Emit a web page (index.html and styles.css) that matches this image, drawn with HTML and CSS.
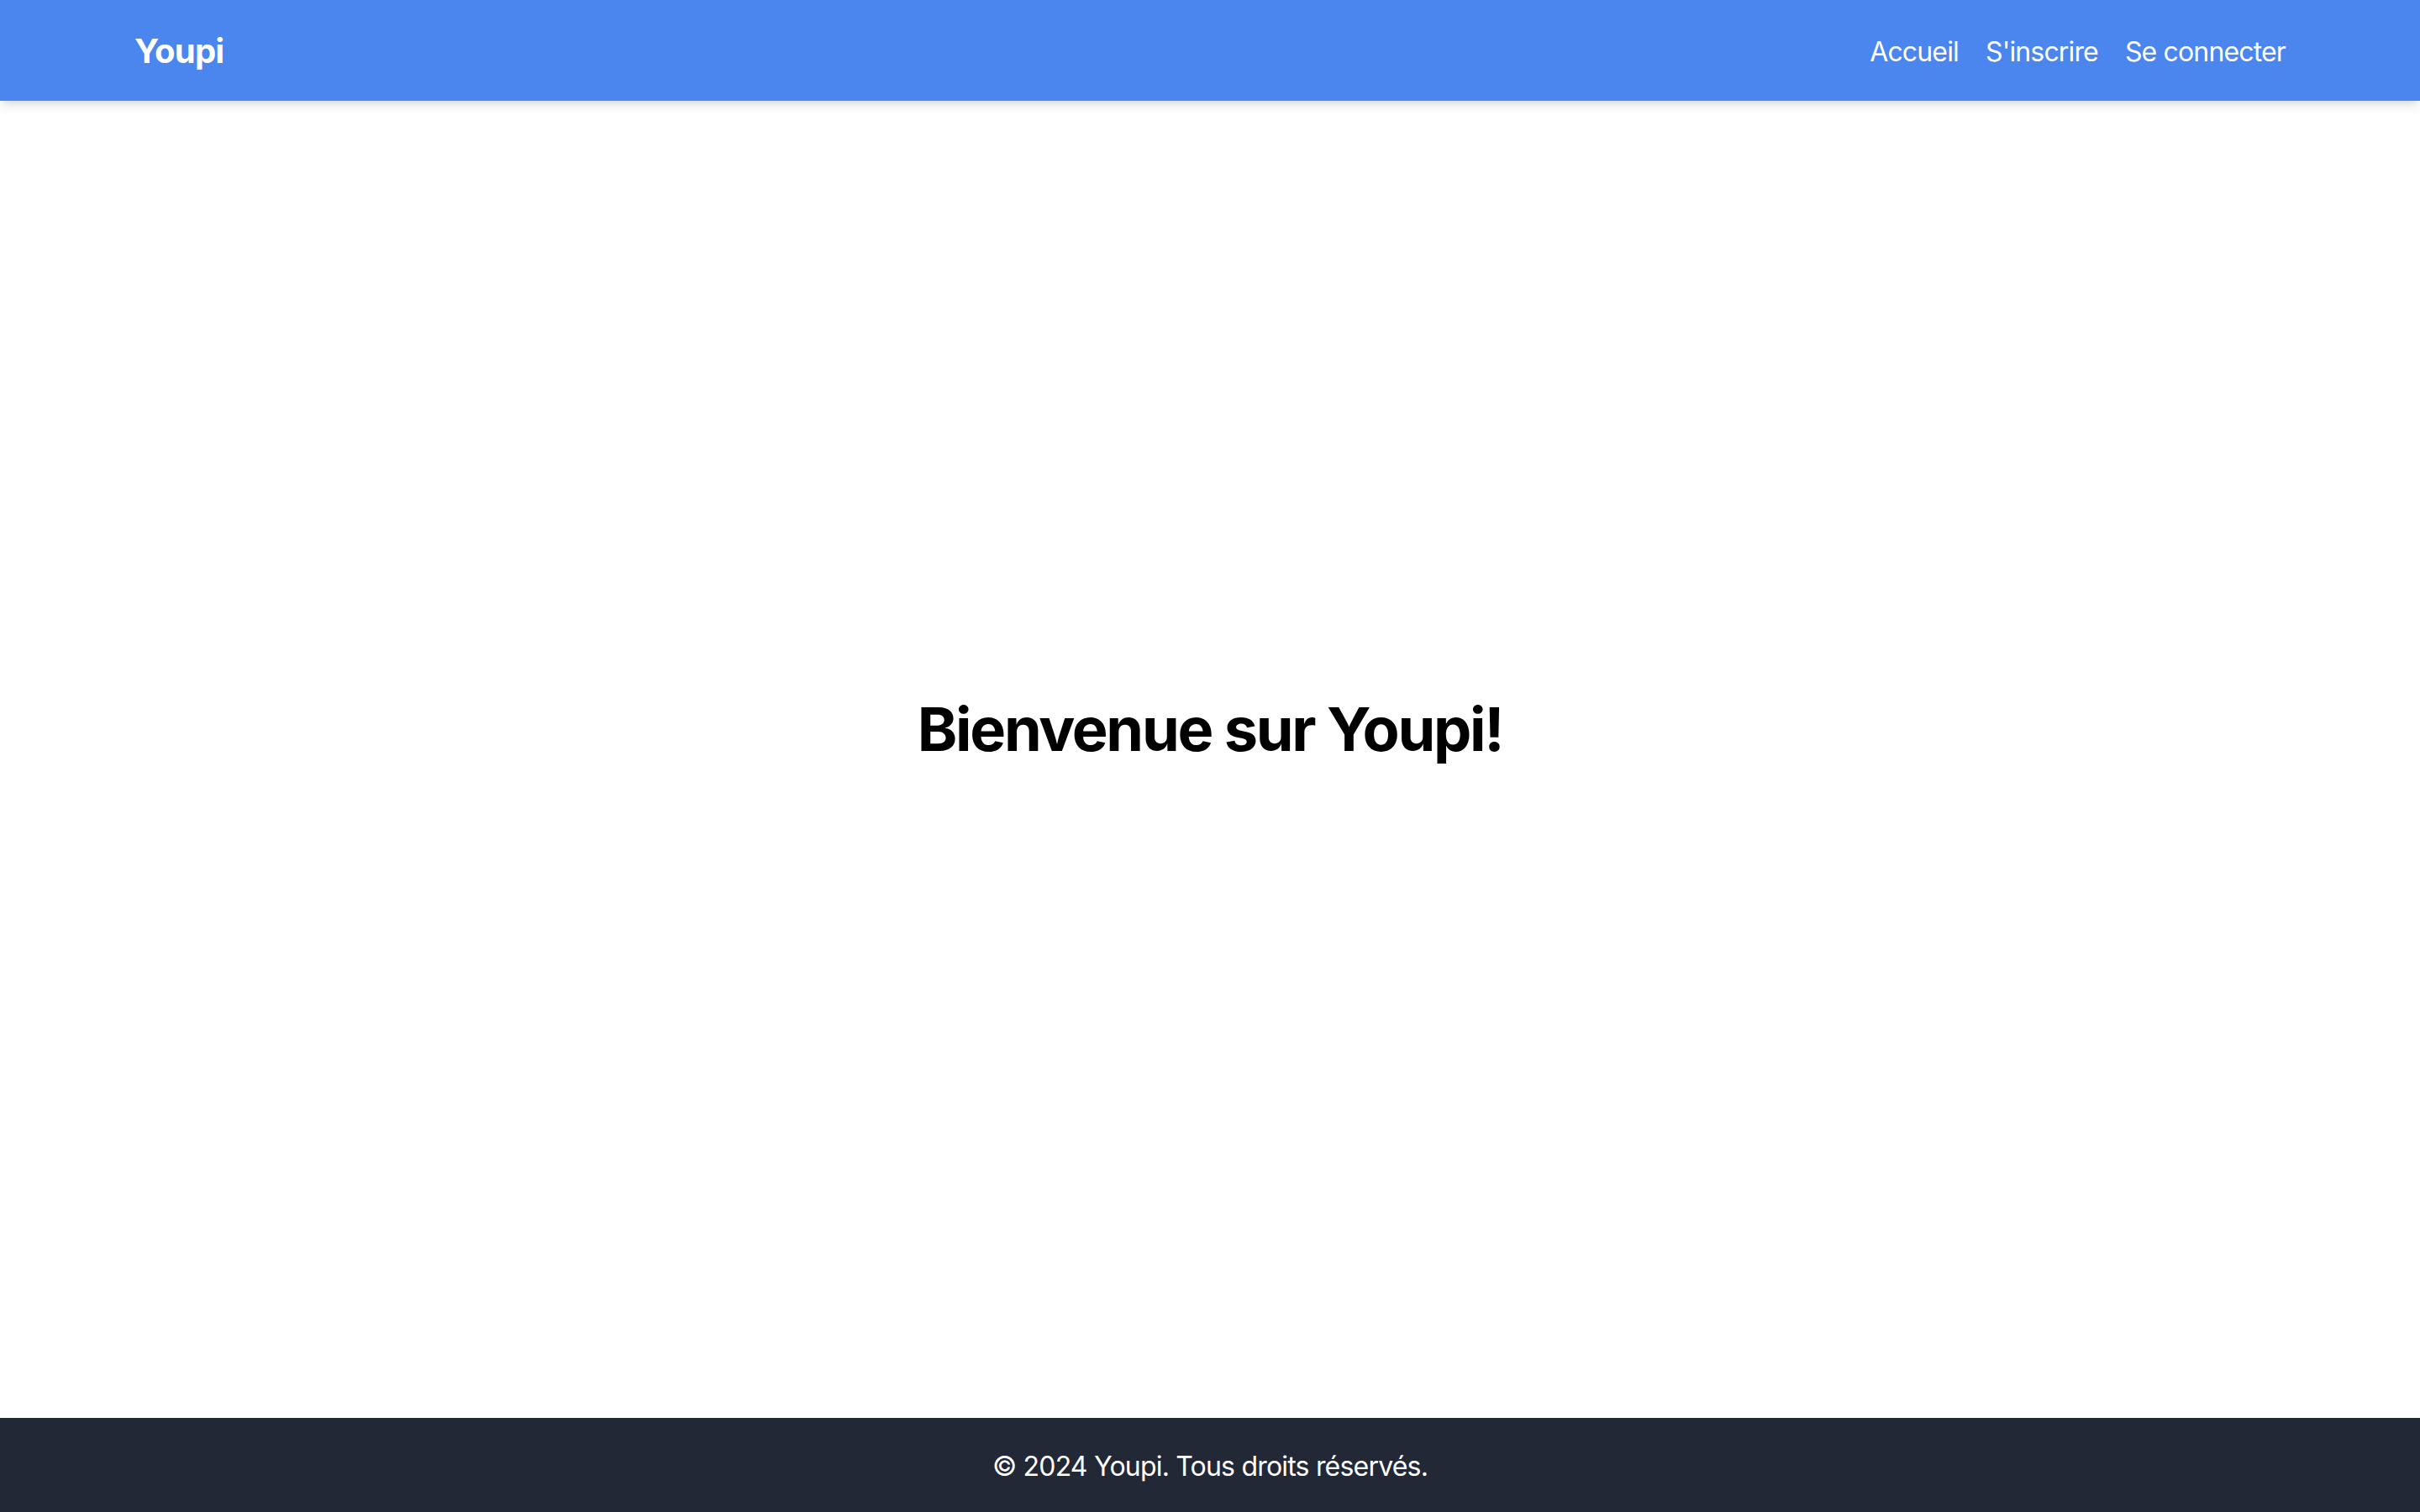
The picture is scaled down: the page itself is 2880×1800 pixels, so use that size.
FILE: index.html
```html
<!DOCTYPE html>
<html lang="fr">
<head>
<meta charset="utf-8">
<title>Youpi</title>
<link rel="stylesheet" href="styles.css">
</head>
<body>
<div class="page">
  <header class="site-header">
    <div class="container header-inner">
      <a class="logo" href="#">Youpi</a>
      <nav class="nav">
        <a href="#">Accueil</a>
        <a href="#">S'inscrire</a>
        <a href="#">Se connecter</a>
      </nav>
    </div>
  </header>
  <main class="main">
    <h1 class="title">Bienvenue sur Youpi!</h1>
  </main>
  <footer class="site-footer">
    <p>© 2024 Youpi. Tous droits réservés.</p>
  </footer>
</div>
</body>
</html>
```
FILE: styles.css
```css
* { box-sizing: border-box; }
html, body { margin: 0; padding: 0; }
body {
  font-family: Inter, "Noto Sans", "Liberation Sans", sans-serif;
  background: #ffffff;
  color: #000;
}
a { text-decoration: none; color: inherit; }
.page {
  min-height: 100vh;
  display: flex;
  flex-direction: column;
}
.site-header {
  background: #4b85ee;
  padding: 32px 0;
  box-shadow: 0 8px 12px -2px rgba(0,0,0,0.1), 0 4px 8px -4px rgba(0,0,0,0.1);
  position: relative;
  z-index: 1;
}
.container {
  width: 2560px;
  margin: 0 auto;
}
.header-inner {
  display: flex;
  justify-content: space-between;
  align-items: center;
  height: 56px;
}
.logo {
  color: #fff;
  font-weight: 700;
  font-size: 40px;
  line-height: 56px;
  letter-spacing: -0.8px;
  padding-top: 2px;
}
.nav {
  display: flex;
  gap: 32px;
  padding-top: 4px;
}
.nav a {
  color: #fff;
  font-size: 32px;
  line-height: 48px;
  letter-spacing: -0.85px;
}
.main {
  flex: 1;
  display: flex;
  align-items: center;
  justify-content: center;
}
.title {
  margin: 0 0 72px;
  font-size: 72px;
  line-height: 80px;
  font-weight: 700;
  letter-spacing: -2.3px;
}
.site-footer {
  background: #222835;
  color: #fff;
  padding: 34px 0 30px;
  text-align: center;
}
.site-footer p {
  margin: 0;
  font-size: 32px;
  line-height: 48px;
  letter-spacing: -0.8px;
}
```
